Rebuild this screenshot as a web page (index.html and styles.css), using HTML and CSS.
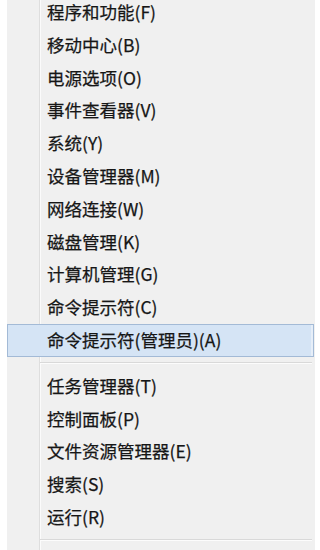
FILE: index.html
```html
<!DOCTYPE html>
<html lang="zh-CN">
<head>
<meta charset="utf-8">
<link rel="stylesheet" href="styles.css">
</head>
<body>
<div class="menu">
  <div class="item">程序和功能(F)</div>
  <div class="item">移动中心(B)</div>
  <div class="item">电源选项(O)</div>
  <div class="item">事件查看器(V)</div>
  <div class="item">系统(Y)</div>
  <div class="item">设备管理器(M)</div>
  <div class="item">网络连接(W)</div>
  <div class="item">磁盘管理(K)</div>
  <div class="item">计算机管理(G)</div>
  <div class="item">命令提示符(C)</div>
  <div class="item active">命令提示符(管理员)(A)</div>
  <div class="sep"></div>
  <div class="item">任务管理器(T)</div>
  <div class="item">控制面板(P)</div>
  <div class="item">文件资源管理器(E)</div>
  <div class="item">搜索(S)</div>
  <div class="item">运行(R)</div>
  <div class="sep"></div>
  <div class="item tail"></div>
</div>
</body>
</html>
```
FILE: styles.css
```css
html, body {
  margin: 0;
  padding: 0;
  background: #ffffff;
  height: 100%;
  overflow: hidden;
}

.menu {
  margin: -4px 5px 0 7px;
  background:
    linear-gradient(to right,
      transparent 32px, #dedede 32px, #dedede 33px,
      #fbfbfb 33px, #fbfbfb 34px, transparent 34px),
    #f0f0f0;
  font-family: "Noto Sans CJK SC", "Microsoft YaHei", sans-serif;
  font-size: 17.5px;
  color: #161616;
  -webkit-text-stroke: 0.25px #161616;
}

.item {
  height: 32.8px;
  line-height: 32.8px;
  padding-left: 40px;
  box-sizing: border-box;
  white-space: nowrap;
}

.item.active {
  background: #d5e4f5;
  border: 1px solid #a3bad6;
  box-shadow: inset -2px 0 0 #e6eef8;
  line-height: 30.8px;
  padding-left: 39px;
  margin-right: 1px;
}

.sep {
  height: 13px;
  display: flex;
  flex-direction: column;
  justify-content: center;
  padding: 0 3px 0 33px;
}

.sep::after {
  content: "";
  display: block;
  height: 1px;
  background: #d9d9d9;
  border-bottom: 1px solid #fcfcfc;
}
```
